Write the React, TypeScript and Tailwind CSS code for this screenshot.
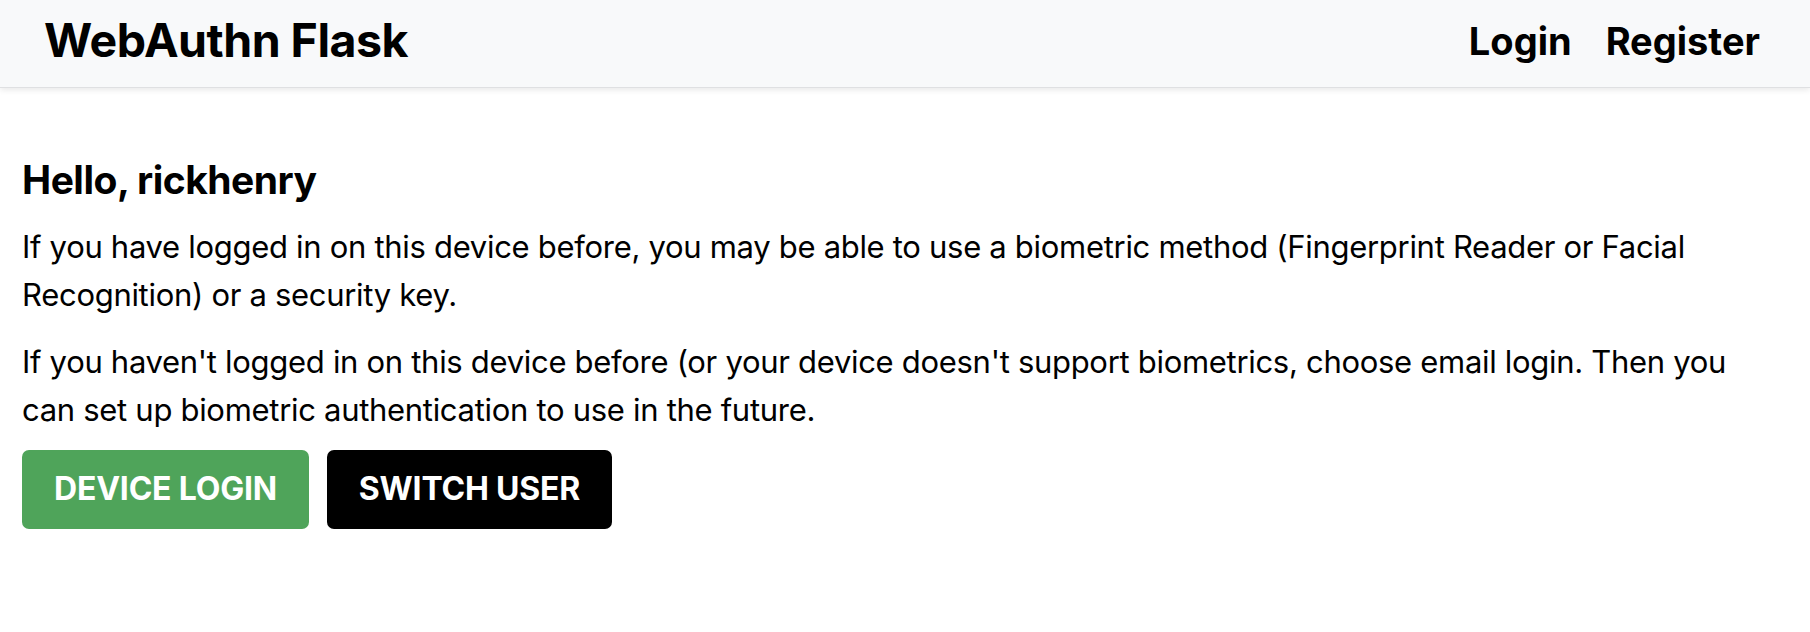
export default function App() {
  return (
    <div className="min-h-[632px] bg-white text-black" style={{ fontFamily: 'Inter, "Noto Sans", sans-serif' }}>
      <header className="relative flex h-[88px] items-center justify-between border-b border-[#dfe0e2] bg-[#f8f9fa] pb-[5px] pl-[44px] pr-[50px] shadow-[0_2px_6px_rgba(0,0,0,0.09)]">
        <div className="text-[46.5px] font-bold tracking-[-0.5px]">WebAuthn Flask</div>
        <nav className="flex items-center gap-[34px] text-[38px] font-bold">
          <a>Login</a>
          <a>Register</a>
        </nav>
      </header>
      <main className="pl-[22px] pr-[40px] pt-[69px]">
        <h2 className="mb-[19px] text-[39px] font-bold leading-[1.2] tracking-[-0.5px]">Hello, rickhenry</h2>
        <p className="mb-[18px] text-[31px] leading-[48.5px] tracking-[-0.3px]">
          If you have logged in on this device before, you may be able to use a biometric method (Fingerprint Reader or Facial Recognition) or a security key.
        </p>
        <p className="mb-[15px] text-[31px] leading-[48.5px] tracking-[-0.3px]">
          If you haven't logged in on this device before (or your device doesn't support biometrics, choose email login. Then you can set up biometric authentication to use in the future.
        </p>
        <div className="flex gap-[18px]">
          <button className="flex h-[79px] w-[287px] items-center justify-center rounded-[7px] bg-[#4fa45a] text-[32px] font-bold uppercase tracking-[-0.2px] text-white">
            Device Login
          </button>
          <button className="flex h-[79px] w-[285px] items-center justify-center rounded-[7px] bg-black text-[32px] font-bold uppercase tracking-[-0.2px] text-white">
            Switch User
          </button>
        </div>
      </main>
    </div>
  );
}
